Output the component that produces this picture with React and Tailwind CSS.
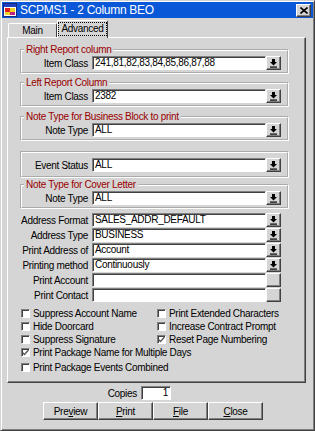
import React from 'react';

const RAISED =
  'border border-t-white border-l-white border-r-[#404040] border-b-[#404040] shadow-[inset_-1px_-1px_0_#808080]';
const SUNKEN =
  'border border-t-[#808080] border-l-[#808080] border-r-white border-b-white shadow-[inset_1px_1px_0_#404040]';

function DropIcon() {
  return (
    <svg width="7" height="9" viewBox="0 0 7 9" className="block">
      <rect x="2" y="0" width="3" height="3" fill="#000" />
      <path d="M0 3 H7 L3.5 6.5 Z" fill="#000" />
      <rect x="0" y="7.5" width="7" height="1.2" fill="#000" />
    </svg>
  );
}

function Field({ value, className = 'w-[174px]', align = 'text-left' }) {
  return (
    <div className={`${className} h-[14px] bg-white ${SUNKEN} flex items-center px-[2px] leading-none whitespace-nowrap overflow-hidden ${align}`}>
      <span className="w-full">{value}</span>
    </div>
  );
}

function DropButton({ icon = true }) {
  return (
    <div className={`w-[15px] h-[14px] bg-[#d5d5d5] ${RAISED} flex items-center justify-center`}>
      {icon && <DropIcon />}
    </div>
  );
}

function Row({ label, value, labelClass, icon = true }) {
  return (
    <div className="flex h-[14px] items-center">
      <span className={`${labelClass} text-right pr-[4px] whitespace-nowrap`}>{label}</span>
      <Field value={value} />
      <DropButton icon={icon} />
    </div>
  );
}

function Group({ legend, children, className = '' }) {
  return (
    <fieldset className={`ml-[12px] w-[269px] border-2 [border-style:groove] border-white ${className}`}>
      {legend && (
        <legend className="ml-[2px] px-[2px] leading-[12px] text-[#990000]">{legend}</legend>
      )}
      {children}
    </fieldset>
  );
}

function Check({ label, checked }) {
  return (
    <div className="flex h-[13px] items-center whitespace-nowrap">
      <div className={`w-[9px] h-[9px] bg-white ${SUNKEN} flex items-center justify-center mr-[3px]`}>
        {checked && (
          <svg width="7" height="7" viewBox="0 0 7 7" className="block">
            <path d="M0.5 3.5 L2.5 5.5 L6.5 1" stroke="#555" strokeWidth="1.3" fill="none" />
          </svg>
        )}
      </div>
      <span>{label}</span>
    </div>
  );
}

function Btn({ children }) {
  return (
    <div className={`w-[55px] h-[18px] bg-[#d5d5d5] ${RAISED} flex items-center justify-center`}>
      {children}
    </div>
  );
}

function TitleIcon() {
  return (
    <svg width="14" height="14" viewBox="0 0 14 14" className="block">
      <rect x="0.5" y="0.5" width="13" height="13" fill="#fff" stroke="#1a2a80" />
      <rect x="1" y="1" width="12" height="3" fill="#2040c0" />
      <rect x="2" y="5" width="5" height="4" fill="#e02020" />
      <rect x="7" y="5" width="5" height="4" fill="#f0d020" />
      <rect x="2" y="9" width="5" height="3" fill="#f0d020" />
      <rect x="7" y="9" width="5" height="3" fill="#c02080" />
    </svg>
  );
}

export default function App() {
  const inner = 'w-[70px]';
  const outer = 'w-[84px]';
  return (
    <div className="w-[315px] h-[431px] bg-[#d5d5d5] border border-t-[#d4d4d4] border-l-[#d4d4d4] border-r-[#404040] border-b-[#404040] shadow-[inset_1px_1px_0_#fff,inset_-1px_-1px_0_#808080] p-[1px] flex flex-col font-['Liberation_Sans',Arial,sans-serif] text-[10px] tracking-[-0.3px] text-black select-none">
      {/* title bar */}
      <div className="h-[16px] bg-[#0a58d8] flex items-center pl-[1px] pr-[2px]">
        <TitleIcon />
        <span className="ml-[3px] text-white text-[12px] tracking-[-0.3px]">SCPMS1 - 2 Column BEO</span>
        <div className={`ml-auto w-[15px] h-[13px] bg-[#d5d5d5] ${RAISED} flex items-center justify-center`}>
          <svg width="8" height="7" viewBox="0 0 8 7" className="block">
            <path d="M0.5 0.5 L7.5 6.5 M7.5 0.5 L0.5 6.5" stroke="#000" strokeWidth="1.6" />
          </svg>
        </div>
      </div>

      {/* tabs */}
      <div className="mt-[2px] h-[17px] ml-[6px] flex items-end">
        <div className="w-[49px] h-[14px] border-t border-l border-r border-t-white border-l-white border-r-[#404040] rounded-t-[2px] flex items-center justify-center">
          Main
        </div>
        <div className="relative z-10 -mb-px w-[51px] h-[18px] bg-[#d5d5d5] border-t border-l border-r border-t-white border-l-white border-r-[#404040] rounded-t-[2px] flex items-start justify-center pt-[1px]">
          <span className="border border-dotted border-black px-[2px] leading-[12px]">Advanced</span>
        </div>
      </div>

      {/* panel */}
      <div className={`ml-[5px] w-[299px] h-[346px] ${RAISED} flex flex-col`}>
        <Group legend="Right Report column" className="mt-[6px] pb-[2px]">
          <Row label="Item Class" value="241,81,82,83,84,85,86,87,88" labelClass={inner} />
        </Group>
        <Group legend="Left Report Column" className="mt-[3px] pb-[2px]">
          <Row label="Item Class" value="2382" labelClass={inner} />
        </Group>
        <Group legend="Note Type for Business Block to print" className="mt-[4px] pb-[2px]">
          <Row label="Note Type" value="ALL" labelClass={inner} />
        </Group>
        <Group className="mt-[10px] pt-[5px] pb-[4px]">
          <Row label="Event Status" value="ALL" labelClass={inner} />
        </Group>
        <Group legend="Note Type for Cover Letter" className="mt-[1px] pb-[2px]">
          <Row label="Note Type" value="ALL" labelClass={inner} />
        </Group>

        <div className="mt-[4px] flex flex-col gap-[1px]">
          <Row label="Address Format" value="SALES_ADDR_DEFAULT" labelClass={outer} />
          <Row label="Address Type" value="BUSINESS" labelClass={outer} />
          <Row label="Print Address of" value="Account" labelClass={outer} />
          <Row label="Printing method" value="Continuously" labelClass={outer} />
          <Row label="Print Account" value="" labelClass={outer} icon={false} />
          <Row label="Print Contact" value="" labelClass={outer} icon={false} />
        </div>

        <div className="mt-[5px] ml-[13px] grid grid-cols-[136px_1fr]">
          <Check label="Suppress Account Name" />
          <Check label="Print Extended Characters" />
          <Check label="Hide Doorcard" />
          <Check label="Increase Contract Prompt" />
          <Check label="Suppress Signature" />
          <Check label="Reset Page Numbering" checked />
        </div>
        <div className="ml-[13px] flex flex-col gap-[2px]">
          <Check label="Print Package Name for Multiple Days" checked />
          <Check label="Print Package Events Combined" />
        </div>
      </div>

      {/* copies */}
      <div className="mt-[3px] flex h-[14px] items-center">
        <span className="w-[139px] text-right pr-[4px]">Copies</span>
        <Field value="1" className="w-[30px]" align="text-right" />
      </div>

      {/* buttons */}
      <div className="mt-[2px] ml-[41px] flex">
        <Btn>Pre<u>v</u>iew</Btn>
        <Btn><u>P</u>rint</Btn>
        <Btn><u>F</u>ile</Btn>
        <Btn><u>C</u>lose</Btn>
      </div>
    </div>
  );
}
